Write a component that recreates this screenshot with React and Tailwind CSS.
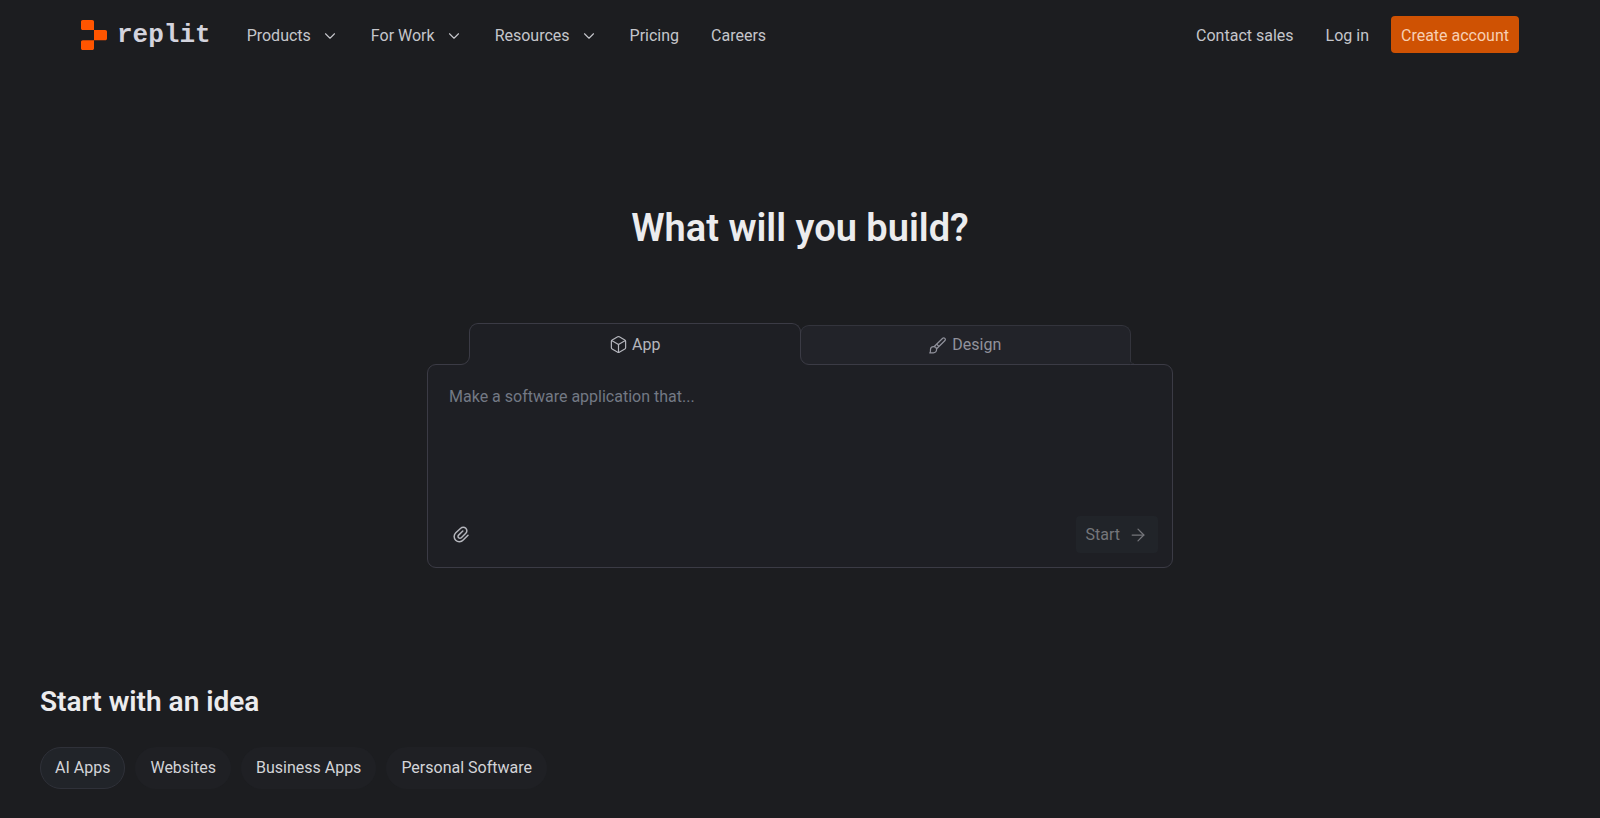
import { Box, ArrowRight, ChevronDown } from "lucide-react";

const navItems = [
  { label: "Products", menu: true },
  { label: "For Work", menu: true },
  { label: "Resources", menu: true },
  { label: "Pricing", menu: false },
  { label: "Careers", menu: false },
];

const ideas = ["AI Apps", "Websites", "Business Apps", "Personal Software"];

const Logo = () => (
  <a href="#" className="flex items-center gap-2.5 text-[#d3d3dd]">
    <svg width="26" height="30" viewBox="0 0 26 30" fill="#ff5500" aria-hidden="true">
      <path d="M0 1.8C0 .8.8 0 1.8 0h9.4c1 0 1.8.8 1.8 1.8V10H1.8C.8 10 0 9.200 0 8.200z" />
      <path d="M13 10h11.200c1 0 1.800.8 1.800 1.800v6.600c0 1-.8 1.800-1.800 1.800H13z" />
      <path d="M0 22c0-1 .8-1.800 1.800-1.800H13v8c0 1-.8 1.800-1.800 1.800H1.800C.8 30 0 29.200 0 28.200z" />
    </svg>
    <span className="font-['Liberation_Mono',monospace] text-[26px] leading-[30px] font-bold">
      replit
    </span>
  </a>
);

const BrushIcon = () => (
  <svg
    width="17"
    height="17"
    viewBox="0 0 17 17"
    fill="none"
    stroke="currentColor"
    strokeWidth="1.2"
    strokeLinejoin="round"
    aria-hidden="true"
  >
    <path d="M5 9.700 13.700 1.200a1.650 1.650 0 0 1 2.300 2.300L7.400 12" />
    <path d="M7.600 7.200 9.900 9.500" />
    <path d="M7.600 12.600a3.200 3.200 0 0 1-3.200 3.300H.8c.9-.8.6-1.900.7-3.300a3.050 3.050 0 0 1 6.100 0z" />
  </svg>
);

const ClipIcon = () => (
  <svg
    width="16"
    height="17"
    viewBox="0 0 16 17"
    fill="none"
    stroke="currentColor"
    strokeWidth="1.5"
    strokeLinecap="round"
    strokeLinejoin="round"
    aria-hidden="true"
  >
    <path d="M15 9.200 10.200 14a5.200 5.200 0 0 1-7.500.2 5.200 5.200 0 0 1 .1-7.500L7.700 2.200a3.600 3.600 0 0 1 5.100 0 3.600 3.600 0 0 1 0 5.100l-4.500 4.500a1.900 1.900 0 0 1-2.700 0 1.900 1.900 0 0 1 0-2.700L9.800 5" />
  </svg>
);

// flare that joins the side of a tab to the panel below it
const TabCurve = ({ className, line }) => (
  <svg className={className} viewBox="0 0 9 9" fill="none" aria-hidden="true">
    <path d="M0 9h9V0h-.5A8.500 8.500 0 0 1 0 8.500z" fill="#1e1f24" />
    <path d="M0 8.500A8.500 8.500 0 0 0 8.500 0" stroke={line} />
  </svg>
);

const Header = () => (
  <header className="flex h-[69px] items-center justify-between px-[81px]">
    <div className="flex items-center gap-9">
      <Logo />
      <nav className="flex items-center gap-8 pt-0.5">
        {navItems.map((item) =>
          item.menu ? (
            <button key={item.label} className="flex items-center gap-[10px]">
              {item.label}
              <ChevronDown size={18} strokeWidth={1.5} />
            </button>
          ) : (
            <a key={item.label} href="#">
              {item.label}
            </a>
          )
        )}
      </nav>
    </div>

    <div className="flex items-center gap-[22px]">
      <div className="flex items-center gap-8 pt-0.5">
        <a href="#">Contact sales</a>
        <a href="#">Log in</a>
      </div>
      <button className="h-[37px] rounded bg-[#cf5203] px-[10px] pt-0.5 text-[#f7cfb4]">
        Create account
      </button>
    </div>
  </header>
);

const PromptBox = () => (
  <section className="mx-auto mt-[72px] w-full max-w-[746px]">
    <div role="tablist" className="flex items-end px-[42px]">
      <button
        role="tab"
        aria-selected="true"
        className="relative z-20 -mb-px flex h-[42px] flex-1 items-center justify-center gap-1 rounded-t-[9px] border border-b-0 border-[#3b3b45] bg-[#1e1f24] text-[#b5b6bd]"
      >
        <TabCurve className="absolute bottom-0 -left-[9px] size-[9px]" line="#3b3b45" />
        <TabCurve
          className="absolute -right-[9px] bottom-0 size-[9px] -scale-x-100"
          line="#3b3b45"
        />
        <Box size={19} strokeWidth={1.5} />
        App
      </button>
      <button
        role="tab"
        aria-selected="false"
        className="relative z-10 -mb-px -ml-px flex h-10 flex-1 items-center justify-center gap-1.5 rounded-t-[9px] border border-b-[#3b3b45] border-[#33343c] bg-[#222329] text-[#91929c]"
      >
        <TabCurve
          className="absolute -right-1 bottom-0 size-1 -scale-x-100"
          line="#3b3b45"
        />
        <BrushIcon />
        Design
      </button>
    </div>

    <div className="flex h-[204px] flex-col rounded-[9px] border border-[#3b3b45] bg-[#1e1f24] pt-5 pr-[14px] pb-[14px] pl-[21px]">
      <textarea
        aria-label="Describe your app"
        placeholder="Make a software application that..."
        className="w-full flex-1 resize-none bg-transparent leading-6 outline-none placeholder:text-[#737984]"
      />
      <div className="flex items-center justify-between">
        <button aria-label="Attach a file" className="px-1 text-[#b5b6bd]">
          <ClipIcon />
        </button>
        <button className="flex h-[37px] items-center gap-2 rounded bg-[#212429] px-[10px] text-[#75767b]">
          Start
          <ArrowRight size={20} strokeWidth={1.5} />
        </button>
      </div>
    </div>
  </section>
);

const App = () => {
  return (
    <div className="min-h-screen bg-[#1c1d20] font-[Roboto,sans-serif] text-base text-[#c5c6cb]">
      <Header />

      <main>
        <h1 className="mt-[136px] text-center text-[38px] leading-[46px] font-semibold text-[#ececee]">
          What will you build?
        </h1>

        <PromptBox />

        <section className="mt-[116px] px-10 pb-7">
          <h2 className="text-[28px] leading-9 font-semibold text-[#ececee]">
            Start with an idea
          </h2>
          <div className="mt-[27px] flex flex-wrap gap-[10px]">
            {ideas.map((idea, i) => (
              <button
                key={idea}
                className={`h-[42px] rounded-full border px-[14px] text-[#d3d4d8] ${
                  i === 0
                    ? "border-[#2f3139] bg-[#212429]"
                    : "border-transparent bg-[#1f2024]"
                }`}
              >
                {idea}
              </button>
            ))}
          </div>
        </section>
      </main>
    </div>
  );
};

export default App;
